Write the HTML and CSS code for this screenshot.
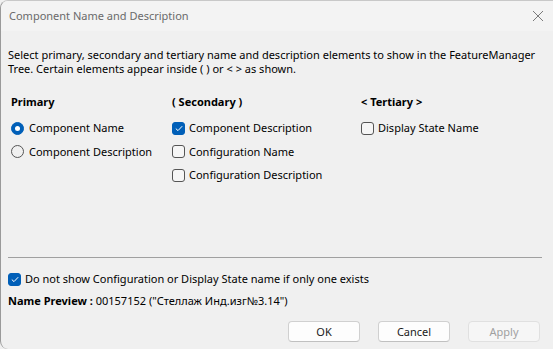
FILE: index.html
```html
<!DOCTYPE html>
<html>
<head>
<meta charset="utf-8">
<link rel="stylesheet" href="styles.css">
</head>
<body>
<div class="window">
  <div class="titlebar">
    <span class="title">Component Name and Description</span>
    <svg class="close" width="12" height="12" viewBox="0 0 12 12"><path d="M1 1L11 11M11 1L1 11" stroke="#7a7a7a" stroke-width="1"/></svg>
  </div>
  <div class="body">
    <p class="intro">Select primary, secondary and tertiary name and description elements to show in the FeatureManager Tree. Certain elements appear inside ( ) or &lt; &gt; as shown.</p>
    <div class="columns">
      <div class="col col1">
        <div class="head">Primary</div>
        <label class="opt"><span class="radio on"></span>Component Name</label>
        <label class="opt"><span class="radio"></span>Component Description</label>
      </div>
      <div class="col col2">
        <div class="head">( Secondary )</div>
        <label class="opt"><span class="check on"><svg width="8" height="7" viewBox="0 0 8 7"><path d="M0.8 3.6L3 5.6L7.2 1.2" fill="none" stroke="#fff" stroke-width="1"/></svg></span>Component Description</label>
        <label class="opt"><span class="check"></span>Configuration Name</label>
        <label class="opt"><span class="check"></span>Configuration Description</label>
      </div>
      <div class="col col3">
        <div class="head">&lt; Tertiary &gt;</div>
        <label class="opt"><span class="check"></span>Display State Name</label>
      </div>
    </div>
    <div class="sep"></div>
    <label class="opt single"><span class="check on"><svg width="8" height="7" viewBox="0 0 8 7"><path d="M0.8 3.6L3 5.6L7.2 1.2" fill="none" stroke="#fff" stroke-width="1"/></svg></span>Do not show Configuration or Display State name if only one exists</label>
    <div class="preview"><b>Name Preview :</b> 00157152 ("Стеллаж Инд.изг№3.14")</div>
    <div class="buttons">
      <button class="btn">OK</button>
      <button class="btn">Cancel</button>
      <button class="btn disabled">Apply</button>
    </div>
  </div>
</div>
</body>
</html>
```
FILE: styles.css
```css
html, body {
  margin: 0;
  padding: 0;
  background: #f0f0f0;
}
body {
  width: 553px;
  height: 349px;
  overflow: hidden;
  font-family: "Noto Sans", "Segoe UI", sans-serif;
  font-size: 11px;
  color: #000;
}
.window {
  width: 553px;
  height: 349px;
  box-sizing: border-box;
  border-left: 1px solid #9a9a9a;
  border-top: 1px solid #c8c8c8;
  border-top-left-radius: 8px;
  border-bottom-left-radius: 8px;
  background: #f0f0f0;
  overflow: hidden;
  display: flex;
  flex-direction: column;
}
.titlebar {
  height: 30px;
  background: #f3f3f3;
  display: flex;
  align-items: center;
  justify-content: space-between;
  padding: 0 9px 0 8px;
  flex: none;
}
.title {
  color: #6a6a6a;
  font-size: 11px;
  margin-top: -1px;
}
.close { margin-top: -1px; }
.body {
  padding: 0 0 0 7px;
  flex: 1;
  display: flex;
  flex-direction: column;
}
.intro {
  margin: 17px 0 0 0;
  line-height: 14px;
  width: 540px;
}
.columns {
  display: flex;
  margin-top: 18px;
  height: 146px;
}
.col {
  display: flex;
  flex-direction: column;
}
.col1 { width: 161px; padding-left: 3px; }
.col2 { width: 189px; }
.head {
  font-weight: bold;
  height: 16px;
  line-height: 16px;
  margin-bottom: 10px;
}
.opt {
  display: flex;
  align-items: center;
  height: 16px;
  line-height: 16px;
  margin-bottom: 7.5px;
  white-space: nowrap;
}
.radio {
  width: 11px;
  height: 11px;
  border: 1px solid #555;
  border-radius: 50%;
  margin-right: 5px;
  box-sizing: content-box;
  position: relative;
  flex: none;
}
.radio.on {
  background: #005fb8;
  border-color: #005fb8;
}
.radio.on::after {
  content: "";
  position: absolute;
  left: 3px;
  top: 3px;
  width: 5px;
  height: 5px;
  border-radius: 50%;
  background: #fff;
}
.check {
  width: 11px;
  height: 11px;
  border: 1px solid #555;
  border-radius: 3px;
  margin-right: 4px;
  flex: none;
  display: flex;
  align-items: center;
  justify-content: center;
  background: #f6f6f6;
}
.check.on {
  background: #005fb8;
  border-color: #005fb8;
}
.sep {
  height: 1px;
  background: #a0a0a0;
  width: 534px;
  margin-top: 17px;
}
.single {
  margin-top: 13px;
  margin-bottom: 6px;
}
.preview {
  line-height: 16px;
}
.buttons {
  display: flex;
  justify-content: flex-end;
  gap: 18px;
  margin-top: 12px;
  padding-right: 13px;
}
.btn {
  width: 72px;
  height: 21px;
  font-family: "Noto Sans", "Segoe UI", sans-serif;
  font-size: 11px;
  background: #fdfdfd;
  border: 1px solid #d0d0d0;
  border-bottom-color: #c0c0c0;
  border-radius: 4px;
  color: #1a1a1a;
  padding: 0;
}
.btn.disabled {
  background: #f6f6f6;
  color: #a0a0a0;
  border-color: #e0e0e0;
}
```
